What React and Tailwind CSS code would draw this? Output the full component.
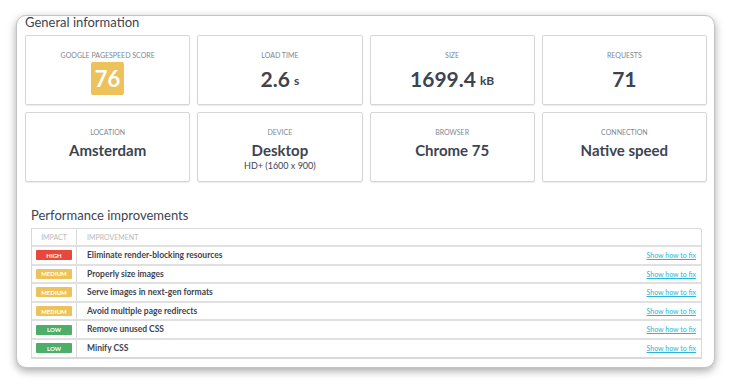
import React from 'react';

const stats = [
    { label: "Google PageSpeed score", score: 76 },
    { label: "Load time", value: "2.6", unit: "s" },
    { label: "Size", value: "1699.4", unit: "kB" },
    { label: "Requests", value: "71" },
];

const details = [
    { label: "Location", value: "Amsterdam" },
    { label: "Device", value: "Desktop", sub: "HD+ (1600 x 900)" },
    { label: "Browser", value: "Chrome 75" },
    { label: "Connection", value: "Native speed" },
];

const improvements = [
    { impact: "HIGH", text: "Eliminate render-blocking resources" },
    { impact: "MEDIUM", text: "Properly size images" },
    { impact: "MEDIUM", text: "Serve images in next-gen formats" },
    { impact: "MEDIUM", text: "Avoid multiple page redirects" },
    { impact: "LOW", text: "Remove unused CSS" },
    { impact: "LOW", text: "Minify CSS" },
];

const badgeColor = {
    HIGH: "bg-[#e8473b]",
    MEDIUM: "bg-[#eec25a]",
    LOW: "bg-[#4cae68]",
};

const App = () => {
    return (
        <div className="w-[730px] h-[384px] bg-white overflow-hidden pl-[16px] pt-[15px]" style={{ fontFamily: "Lato, 'Noto Sans', sans-serif" }}>
            <div className="w-[699px] h-[353px] bg-white rounded-[10px] border border-[#c4c4c4] shadow-[0_3px_8px_rgba(0,0,0,0.35)] pl-[8px] pr-[7px] text-[#3d4450]">
                <h2 className="text-[13px] leading-[16px] mt-[-2px] text-[#3d4450]">General information</h2>

                {/* Stats */}
                <div className="grid grid-cols-4 gap-[7px] mt-[5px]">
                    {stats.map(s => (
                        <div key={s.label} className="h-[70px] border border-[#d6d6d6] rounded-[2px] shadow-[0_1px_1px_rgba(0,0,0,0.08)] flex flex-col items-center pt-[15px]">
                            <p className="text-[7px] leading-[8px] uppercase text-[#7e8797]">{s.label}</p>
                            {s.score !== undefined ? (
                                <div className="mt-[3px] w-[33px] h-[33px] bg-[#eec25a] rounded-[2px] flex items-center justify-center text-white font-bold text-[22px]">
                                    {s.score}
                                </div>
                            ) : (
                                <div className="mt-[3px] h-[33px] flex items-center font-bold text-[21px]">
                                    {s.value}
                                    {s.unit && <span className="text-[12px] ml-[4px] mt-[4px]">{s.unit}</span>}
                                </div>
                            )}
                        </div>
                    ))}
                </div>

                {/* Details */}
                <div className="grid grid-cols-4 gap-[7px] mt-[7px]">
                    {details.map(d => (
                        <div key={d.label} className="h-[70px] border border-[#d6d6d6] rounded-[2px] shadow-[0_1px_1px_rgba(0,0,0,0.08)] flex flex-col items-center pt-[15px]">
                            <p className="text-[7px] leading-[8px] uppercase text-[#7e8797]">{d.label}</p>
                            <p className="mt-[5px] text-[15px] leading-[18px] font-bold">{d.value}</p>
                            {d.sub && <p className="mt-[1px] text-[9px] leading-[11px]">{d.sub}</p>}
                        </div>
                    ))}
                </div>

                {/* Performance improvements */}
                <div className="pl-[6px] pr-[5px]">
                    <h2 className="text-[13px] leading-[16px] mt-[25px] text-[#3d4450]">Performance improvements</h2>
                    <div className="mt-[5px] border border-[#d9d9d9] rounded-tr-[3px] border-b-2">
                        <div className="flex h-[16px] items-center text-[7px] uppercase text-[#b9b9b9]">
                            <div className="w-[45px] h-full border-r border-[#d9d9d9] flex items-center justify-center">Impact</div>
                            <div className="pl-[10px]">Improvement</div>
                        </div>
                        {improvements.map((row, i) => (
                            <div key={i} className="flex h-[18.6px] items-center border-t-2 border-[#e0e0e0]">
                                <div className="w-[45px] h-full border-r border-[#d9d9d9] flex items-center justify-center">
                                    <span className={`${badgeColor[row.impact]} w-[36px] h-[10px] rounded-[1px] text-white text-[6px] font-bold flex items-center justify-center`}>{row.impact}</span>
                                </div>
                                <div className="pl-[10px] flex-1 text-[8.5px] font-bold">{row.text}</div>
                                <a href="#" className="pr-[5px] text-[7px] text-[#29b4d8] underline">Show how to fix</a>
                            </div>
                        ))}
                    </div>
                </div>
            </div>
        </div>
    );
};

export default App;
